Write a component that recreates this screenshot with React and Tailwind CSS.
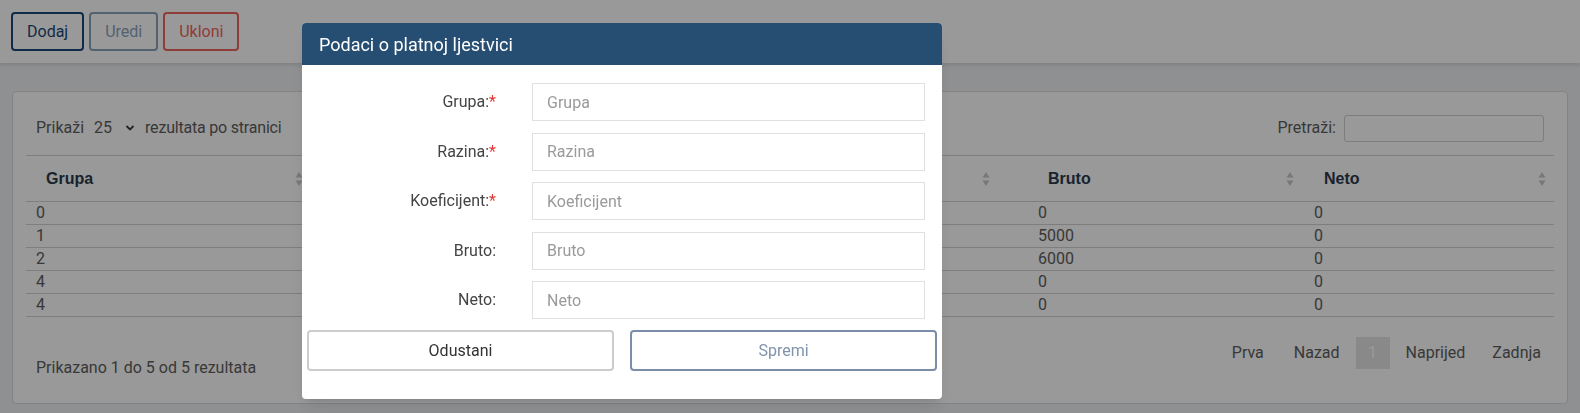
import { useState } from "react";

const rows = [
  { grupa: "0", razina: "", koef: "", bruto: "0", neto: "0" },
  { grupa: "1", razina: "", koef: "", bruto: "5000", neto: "0" },
  { grupa: "2", razina: "", koef: "", bruto: "6000", neto: "0" },
  { grupa: "4", razina: "", koef: "", bruto: "0", neto: "0" },
  { grupa: "4", razina: "", koef: "", bruto: "0", neto: "0" },
];

const columns = [
  { key: "grupa", label: "Grupa", cls: "w-[285px] pr-[8px]" },
  { key: "razina", label: "Razina", cls: "w-[355px] pr-[8px]" },
  { key: "koef", label: "Koeficijent", cls: "w-[362px] pr-[38px]" },
  { key: "bruto", label: "Bruto", cls: "w-[276px] pr-[10px]" },
  { key: "neto", label: "Neto", cls: "w-[250px] pr-[8px]" },
];

const fields = [
  { label: "Grupa", required: true },
  { label: "Razina", required: true },
  { label: "Koeficijent", required: true },
  { label: "Bruto", required: false },
  { label: "Neto", required: false },
];

function SortIcon() {
  return (
    <svg width="8" height="16" viewBox="0 0 8 16" className="shrink-0">
      <path d="M4 1 L7.5 6.5 H0.5 Z" fill="#c8c8c8" />
      <path d="M4 15 L7.5 9.5 H0.5 Z" fill="#c8c8c8" />
    </svg>
  );
}

export default function App() {
  const [values, setValues] = useState({});

  return (
    <div className="min-h-screen bg-[#eef0f3] font-['Roboto',sans-serif] text-[#5e5e5e]">
      {/* top toolbar */}
      <div className="h-[63px] bg-white shadow-[0_2px_4px_rgba(0,0,0,0.12)] flex items-center gap-[5px] px-[11px]">
        <button className="h-[39px] px-[14px] rounded-[4px] border-2 border-[#1b4877] text-[#1b4877] text-[16px]">
          Dodaj
        </button>
        <button className="h-[39px] px-[14px] rounded-[4px] border-2 border-[#8aa3bd] text-[#8aa3bd] text-[16px]">
          Uredi
        </button>
        <button className="h-[39px] px-[14px] rounded-[4px] border-2 border-[#f06560] text-[#f06560] text-[16px]">
          Ukloni
        </button>
      </div>

      {/* card */}
      <div className="mx-[12px] mt-[28px] bg-white rounded-[4px] border border-[#dcdcdc] px-[13px] pt-[22px] pb-[23px]">
        <div className="flex items-center justify-between h-[28px] mb-[13px]">
          <div className="flex items-center text-[16px] pl-[10px]">
            <span>Prikaži</span>
            <span className="ml-[10px]">25</span>
            <svg width="10" height="8" viewBox="0 0 10 8" className="ml-[13px]">
              <path d="M1.5 2 L5 5.5 L8.5 2" stroke="#3a3a3a" strokeWidth="1.8" fill="none" />
            </svg>
            <span className="ml-[10px] tracking-[-0.2px]">rezultata po stranici</span>
          </div>
          <div className="flex items-center text-[16px] pr-[10px]">
            <span>Pretraži:</span>
            <input className="ml-[8px] w-[200px] h-[27px] border border-[#d0d0d0] rounded-[3px] bg-white" />
          </div>
        </div>

        <table className="w-[1528px] border-collapse text-[16px]">
          <thead>
            <tr className="border-t border-b border-[#d2d2d2] h-[46px]">
              {columns.map((c) => (
                <th key={c.key} className={`${c.cls} text-left font-bold font-['Liberation_Sans',sans-serif] text-[#2b3b4c] pl-[20px]`}>
                  <div className="flex items-center justify-between">
                    <span>{c.label}</span>
                    <SortIcon />
                  </div>
                </th>
              ))}
            </tr>
          </thead>
          <tbody>
            {rows.map((r, i) => (
              <tr key={i} className="border-b border-[#d2d2d2] h-[23px]">
                {columns.map((c) => (
                  <td key={c.key} className="pl-[10px] leading-[22px]">
                    {r[c.key]}
                  </td>
                ))}
              </tr>
            ))}
          </tbody>
        </table>

        <div className="flex items-start justify-between mt-[20px] text-[16px]">
          <span className="pl-[10px] pt-[19px]">Prikazano 1 do 5 od 5 rezultata</span>
          <div className="flex items-center h-[32px] pr-[13px]">
            <span>Prva</span>
            <span className="ml-[30px]">Nazad</span>
            <span className="ml-[16px] w-[34px] h-[32px] bg-[#e5e5e5] text-white flex items-center justify-center">1</span>
            <span className="ml-[16px]">Naprijed</span>
            <span className="ml-[27px]">Zadnja</span>
          </div>
        </div>
      </div>

      {/* overlay */}
      <div className="fixed inset-0 bg-black/40" />

      {/* modal */}
      <div className="fixed left-[302px] top-[23px] w-[640px] bg-white rounded-[4px] overflow-hidden shadow-lg">
        <div className="h-[42px] bg-[#264d72] flex items-center px-[17px]">
          <span className="text-white text-[18px]">Podaci o platnoj ljestvici</span>
        </div>
        <div className="pt-[18px] flex flex-col gap-[11.6px]">
          {fields.map((f) => (
            <div key={f.label} className="flex items-center">
              <label className="w-[194px] text-right text-[16px] text-[#444]">
                {f.label}:{f.required && <span className="text-[#e53935]">*</span>}
              </label>
              <input
                placeholder={f.label}
                value={values[f.label] || ""}
                onChange={(e) => setValues({ ...values, [f.label]: e.target.value })}
                className="ml-[36px] w-[393px] h-[38px] border border-[#e0e0e0] px-[14px] text-[16px] text-[#333] placeholder:text-[#9a9a9a] outline-none"
              />
            </div>
          ))}
        </div>
        <div className="flex gap-[16px] px-[5px] mt-[11px] pb-[28px]">
          <button className="flex-1 h-[41px] rounded-[4px] border-2 border-[#cccccc] text-[16px] text-[#333]">
            Odustani
          </button>
          <button className="flex-1 h-[41px] rounded-[4px] border-2 border-[#7a8ea7] text-[16px] text-[#7f93ab]">
            Spremi
          </button>
        </div>
      </div>
    </div>
  );
}
